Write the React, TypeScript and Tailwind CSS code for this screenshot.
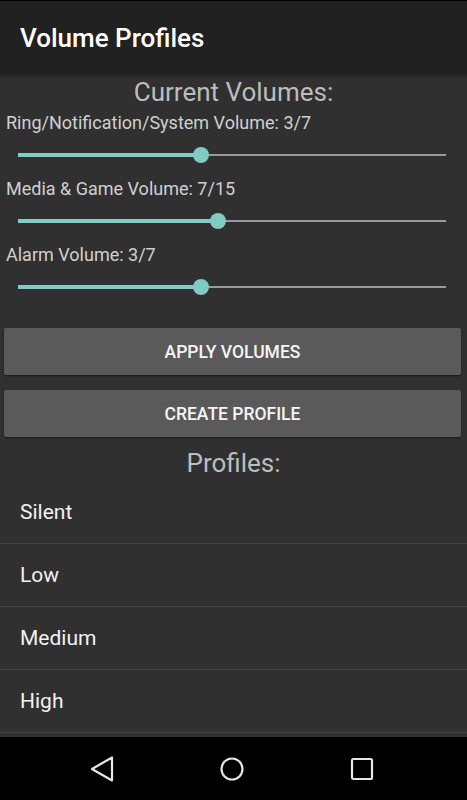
import React from 'react';

const volumes = [
  { label: 'Ring/Notification/System Volume', value: 3, max: 7 },
  { label: 'Media & Game Volume', value: 7, max: 15 },
  { label: 'Alarm Volume', value: 3, max: 7 },
];

const profiles = ['Silent', 'Low', 'Medium', 'High'];

function Slider({ value, max }: { value: number; max: number }) {
  const pct = (value / max) * 100;
  return (
    <div className="h-[44px] pl-[18px] pr-[21px] flex items-center">
      <div className="relative w-full h-[4px] flex items-center">
        <div className="absolute left-0 right-0 h-[2px] bg-[#9a9a9a]" />
        <div className="absolute left-0 h-[4px] bg-[#80cbc4]" style={{ width: `${pct}%` }} />
        <div
          className="absolute w-[16px] h-[16px] rounded-full bg-[#80cbc4] -translate-x-1/2"
          style={{ left: `${pct}%` }}
        />
      </div>
    </div>
  );
}

function Button({ children }: { children: React.ReactNode }) {
  return (
    <button className="h-[47px] w-full pt-[2px] rounded-[2px] bg-[#5a5a5a] shadow-[0_1px_2px_rgba(0,0,0,0.5)] text-[17.5px] font-medium text-[#f5f5f5]">
      {children}
    </button>
  );
}

export default function App() {
  return (
    <div className="w-full h-[800px] flex flex-col bg-[#303030] font-['Roboto',sans-serif] overflow-hidden">
      {/* App bar */}
      <div className="h-[74px] shrink-0 bg-[#212121] border-t border-black flex items-center px-5 shadow-[0_2px_3px_rgba(0,0,0,0.3)]">
        <h1 className="text-[26px] font-medium text-white leading-none pt-[1px]">Volume Profiles</h1>
      </div>

      <div className="flex-1 flex flex-col">
        <div className="h-[37px] leading-[37px] text-center text-[26px] text-[#bdbdbd]">Current Volumes:</div>

        {volumes.map((v) => (
          <div key={v.label}>
            <div className="h-[22px] leading-[22px] pl-[6px] text-[18px] text-[#d0d0d0] pt-[1px]">
              {v.label}: {v.value}/{v.max}
            </div>
            <Slider value={v.value} max={v.max} />
          </div>
        ))}

        <div className="pl-[4px] pr-[6px] mt-[19px] flex flex-col gap-[15px]">
          <Button>APPLY VOLUMES</Button>
          <Button>CREATE PROFILE</Button>
        </div>

        <div className="h-[44px] pt-[8px] leading-[36px] text-center text-[26px] text-[#bdbdbd]">Profiles:</div>

        <ul className="flex flex-col">
          {profiles.map((p) => (
            <li
              key={p}
              className="h-[63px] flex items-center pl-5 pt-[1px] text-[21px] text-[#f2f2f2] border-b border-[#444444]"
            >
              {p}
            </li>
          ))}
        </ul>
      </div>

      {/* Navigation bar */}
      <div className="h-[63px] shrink-0 bg-black flex items-center justify-center gap-[106px] pr-[3px]">
        <svg width="24" height="26" viewBox="0 0 24 26" fill="none" stroke="#e6e6e6" strokeWidth="2.2" strokeLinejoin="round">
          <path d="M2 13 L22 1.5 L22 24.5 Z" />
        </svg>
        <svg width="24" height="24" viewBox="0 0 24 24" fill="none" stroke="#e6e6e6" strokeWidth="2.2">
          <circle cx="12" cy="12" r="10.5" />
        </svg>
        <svg width="24" height="24" viewBox="0 0 24 24" fill="none" stroke="#e6e6e6" strokeWidth="2.2">
          <rect x="2" y="2" width="20" height="20" rx="1.5" />
        </svg>
      </div>
    </div>
  );
}
